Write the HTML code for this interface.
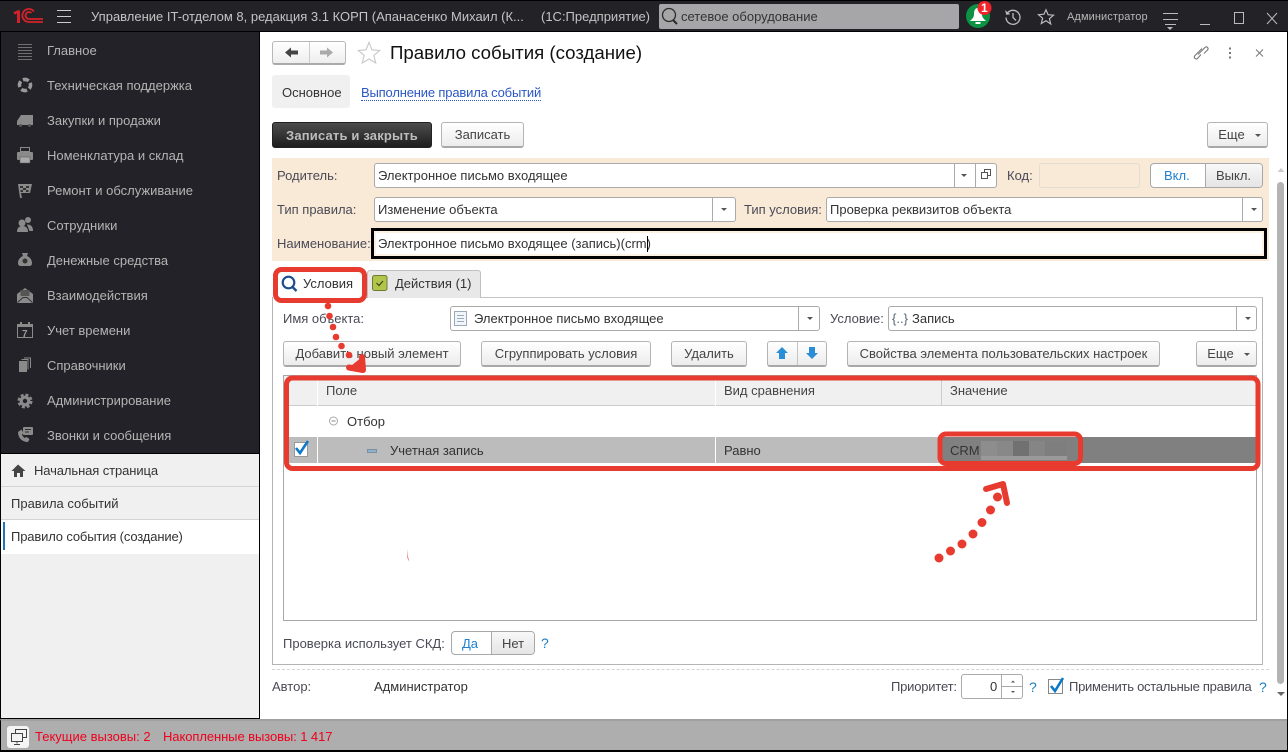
<!DOCTYPE html>
<html><head><meta charset="utf-8">
<style>
html,body{margin:0;padding:0;background:#fff}
#r{position:relative;width:1288px;height:752px;overflow:hidden;background:#fff;font-family:"Liberation Sans",sans-serif;font-size:13px;color:#333}
.t{position:absolute;line-height:16px;white-space:nowrap}
.b{position:absolute;box-sizing:border-box}
.s{color:#b4b4b4;left:47px}
.btn{position:absolute;box-sizing:border-box;height:26px;border:1px solid #b4b4b4;border-bottom:2px solid #a8a8a8;border-radius:3px;background:linear-gradient(#fff,#ececec);text-align:center;line-height:23px;color:#444;white-space:nowrap}
.inp{position:absolute;box-sizing:border-box;height:25px;background:#fff;border:1px solid #aaa;border-radius:3px}
.d{position:absolute;top:0;bottom:0;width:1px;background:#aaa}
.ar{position:absolute;width:0;height:0;border-left:3px solid transparent;border-right:3px solid transparent;border-top:3px solid #555}
.l{color:#4a4a55}
.q{color:#1c7fbf;font-size:14px}
svg{position:absolute;overflow:visible}
</style></head><body><div id="r">

<!-- title bar -->
<div class="b" style="left:0;top:0;width:1288px;height:32px;background:#232227;border-top:1px solid #000;border-bottom:1px solid #000"></div>
<svg style="left:0;top:0" width="100" height="32"><g fill="none" stroke="#d3222a" stroke-width="1.800"><path d="M14 13.500l5-2.500" stroke-width="2.500"/><path d="M18.500 10.500V23" stroke-width="3"/><path d="M43 22H29a6.500 6.500 0 1 1 5-10.500"/><path d="M43 19H29a3.500 3.500 0 1 1 2.500-6"/></g><g stroke="#ccc" stroke-width="1"><path d="M57 10.500h14M57 16.500h14M57 22.500h14"/></g></svg>
<div class="t" style="left:91px;top:9px;color:#c4c4c4">Управление IT-отделом 8, редакция 3.1 КОРП (Апанасенко Михаил (К...</div>
<div class="t" style="left:541px;top:9px;color:#c4c4c4">(1С:Предприятие)</div>
<div class="b" style="left:659px;top:4px;width:300px;height:25px;background:#a6a6a8;border-radius:2px"></div>
<svg style="left:660px;top:5px" width="22" height="22"><circle cx="9" cy="10" r="6.500" fill="none" stroke="#2a2a2a" stroke-width="1.300"/><path d="M13 15l4 4" stroke="#2a2a2a" stroke-width="2"/></svg>
<div class="t" style="left:681px;top:9px;color:#333">сетевое оборудование</div>
<svg style="left:960px;top:0" width="40" height="32"><circle cx="18" cy="16" r="12" fill="#0b9343"/><path d="M18 8c-3.500 0-4 3.500-4 6.500 0 3-2 4.500-4 6.500h16c-2-2-4-3.500-4-6.500 0-3-.5-6.500-4-6.500z" fill="#fff"/><rect x="15.500" y="22" width="5" height="2" fill="#fff"/><circle cx="24.500" cy="8" r="7" fill="#f0222a"/></svg>
<div class="t" style="left:981px;top:0;color:#fff;font-weight:bold;font-size:12px">1</div>
<svg style="left:1004px;top:9px" width="18" height="17" fill="none" stroke="#bbb" stroke-width="1.300"><path d="M3.500 4A7 7 0 1 1 2 8.500"/><path d="M1.500 1.500l1 4 3.500-.5" fill="#bbb" stroke-width=".6"/><path d="M9 4v4.500l3 3"/></svg>
<svg style="left:1038px;top:9px" width="17" height="15"><path d="M8 .8l2.100 4.900 5.400.5-4.100 3.500 1.300 5.300L8 11.700l-4.700 2.800 1.300-5.300L.5 5.700l5.400-.5z" fill="none" stroke="#bbb" stroke-width="1.200"/></svg>
<div class="t" style="left:1067px;top:9px;color:#b8b8b8;font-size:11px;letter-spacing:.1px">Администратор</div>
<svg style="left:1160px;top:8px" width="125" height="24" stroke="#bbb" fill="none"><path d="M3 5.500h15M3 11.500h15M5 16.500h11"/><path d="M7 19l3 3 3-3z" fill="#bbb" stroke="none"/><path d="M40 16.500h10"/><rect x="74.500" y="4.500" width="9" height="11"/><path d="M107 5l10 11M117 5l-10 11"/></svg>

<!-- sidebar -->
<div class="b" style="left:0;top:32px;width:260px;height:687px;background:#f0f0f0;border-left:1px solid #000;border-right:1px solid #000;border-bottom:1px solid #000"></div>
<div class="b" style="left:1px;top:32px;width:258px;height:422px;background:#232228;border-bottom:1px solid #000"></div>
<div class="t s" style="top:43px">Главное</div>
<div class="t s" style="top:78px">Техническая поддержка</div>
<div class="t s" style="top:113px">Закупки и продажи</div>
<div class="t s" style="top:148px">Номенклатура и склад</div>
<div class="t s" style="top:183px">Ремонт и обслуживание</div>
<div class="t s" style="top:218px">Сотрудники</div>
<div class="t s" style="top:253px">Денежные средства</div>
<div class="t s" style="top:288px">Взаимодействия</div>
<div class="t s" style="top:323px">Учет времени</div>
<div class="t s" style="top:358px">Справочники</div>
<div class="t s" style="top:393px">Администрирование</div>
<div class="t s" style="top:428px">Звонки и сообщения</div>
<svg style="left:17px;top:40px" width="20" height="410" fill="#8a8a8a">
<path d="M1 3.500h14M1 6.500h14M1 9.500h14M1 12.500h14M1 15.500h14M1 18.500h14" stroke="#8a8a8a" stroke-width=".8" transform="translate(0 1)"/>
<circle cx="8" cy="45" r="5.500" fill="none" stroke="#999" stroke-width="3.500" stroke-dasharray="6 2.600" transform="rotate(-22 8 45)"/>
<path d="M0 85v-4l4-6h12v10z"/><circle cx="3.500" cy="85.500" r="1.500" fill="#555"/><circle cx="12.500" cy="85.500" r="1.500" fill="#555"/>
<rect x="0" y="112" width="16" height="8" rx="1"/><rect x="3.500" y="107.500" width="9" height="4" fill="none" stroke="#8a8a8a"/><rect x="3" y="117" width="10" height="6" fill="#aaa" stroke="#555" stroke-width=".5"/>
<path d="M1 144h14l-2 9H4l1 5H3z"/><path d="M3 146h3v2H3zM9 146h3v2H9zM6 148h3v2H6zM3.500 150h2.500v2H3.500zM9 150h2.500v2H9z" fill="#333"/>
<circle cx="5" cy="183" r="3.500"/><path d="M0 192c0-4 2-6 5.500-6s5.500 2 5.500 6z"/><circle cx="11" cy="180" r="3"/><path d="M10 184.500c3 0 6 1 6 6.500h-3.500z"/>
<path d="M5 213h6l-1 3c3 1 5 4 5 7 0 2-1 3-3 3H4c-2 0-3-1-3-3 0-3 2-6 5-7z"/><circle cx="8" cy="221" r="2.500" fill="#333"/>
<path d="M0 254l8-6 8 6v9H0z"/><rect x="3.500" y="250" width="9" height="6" fill="#555"/><path d="M0.500 262.500l5.500-5h4l5.500 5" fill="none" stroke="#333"/>
<rect x=".5" y="284.500" width="15" height="13" fill="none" stroke="#8a8a8a"/><rect x="0" y="284" width="16" height="3"/><rect x="3" y="282" width="2" height="3"/><rect x="11" y="282" width="2" height="3"/><text x="5" y="297" font-size="10" font-weight="bold" font-family="Liberation Sans" fill="#999">7</text>
<rect x="2" y="321" width="8" height="11"/><path d="M4.500 319.500h6.500v10M7 318h6.500v10" fill="none" stroke="#8a8a8a"/>
<circle cx="8" cy="361" r="3.800" fill="none" stroke="#8a8a8a" stroke-width="3.200"/><circle cx="8" cy="361" r="6.300" fill="none" stroke="#8a8a8a" stroke-width="2.400" stroke-dasharray="3 2"/>
<path d="M1 392c0 6 4 10 10 10l1.500-3-3-2-2 1c-1-1-2-2-2.500-3.500l1.500-1.500-2-3.500z"/><rect x="6" y="387" width="10" height="8" rx="1"/><path d="M8 389.500h6M8 392h4" stroke="#333"/>
</svg>
<div class="t" style="left:34px;top:463px;color:#333;letter-spacing:-.1px">Начальная страница</div>
<svg style="left:11px;top:463px" width="16" height="16"><path d="M7 1.500L.5 8H3v6h3v-4h3v4h3V8h2.500z" fill="#444"/></svg>
<div class="b" style="left:1px;top:486px;width:258px;height:1px;background:#d4d4d4"></div>
<div class="t" style="left:11px;top:496px;color:#333">Правила событий</div>
<div class="b" style="left:1px;top:519px;width:258px;height:35px;background:#fff;border-top:1px solid #d4d4d4"></div>
<div class="b" style="left:3px;top:522px;width:2px;height:28px;background:#1c76b8"></div>
<div class="t" style="left:11px;top:529px;color:#333;letter-spacing:-.15px">Правило события (создание)</div>

<!-- bottom bar -->
<div class="b" style="left:0;top:719px;width:1288px;height:33px;background:#aeaeae;border-top:2px solid #a0a0a0;border-bottom:2px solid #000;border-left:1px solid #000"></div>
<div class="b" style="left:7px;top:726px;width:22px;height:22px;background:#f4f4f4;border-radius:3px"></div>
<svg style="left:10px;top:729px" width="18" height="18" fill="#f4f4f4" stroke="#444"><rect x="5.500" y=".5" width="11" height="8"/><rect x="1.500" y="4.500" width="11" height="8"/><path d="M7 12.500v2M4 15.500h6"/></svg>
<div class="t" style="left:35px;top:729px;color:#f0001c">Текущие вызовы: 2</div>
<div class="t" style="left:163px;top:729px;color:#f0001c;letter-spacing:-.08px">Накопленные вызовы: 1 417</div>
<div class="b" style="left:1287px;top:32px;width:1px;height:720px;background:#000"></div>

<!-- header -->
<div class="b" style="left:272px;top:41px;width:74px;height:24px;border:1px solid #b8b8b8;border-bottom:2px solid #aaa;border-radius:3px;background:linear-gradient(#fff,#eee)"></div>
<div class="b" style="left:309px;top:42px;width:1px;height:21px;background:#ccc"></div>
<svg style="left:272px;top:41px" width="74" height="24"><path d="M12 12.500l6-5v3h7v4h-7v3z" fill="#444" transform="translate(1 -1)"/><path d="M62 12.500l-6-5v3h-7v4h7v3z" fill="#aaa" transform="translate(-1 -1)"/></svg>
<svg style="left:357px;top:41px" width="24" height="24"><path d="M12 1.500l3 7.300 7.700.6-5.900 5 1.900 7.600L12 18l-6.700 4 1.900-7.600-5.900-5 7.700-.6z" fill="none" stroke="#c8c8c8" stroke-width="1.100"/></svg>
<div class="t" style="left:390px;top:43px;font-size:18.670px;line-height:20px;color:#111">Правило события (создание)</div>
<svg style="left:1190px;top:43px" width="80" height="20" fill="none" stroke="#777"><path d="M9 12l7-7c2-2 4 1 2.500 2.500L15 11M13 6L6 13c-2 2 1 4.500 2.500 3L12 12" stroke-width="1.100" transform="translate(-1 -.5)"/><path d="M40 4.500v2M40 9v2M40 13.500v2" stroke-width="2"/><path d="M66 6.500l7 7M73 6.500l-7 7"/></svg>
<div class="b" style="left:272px;top:75px;width:78px;height:33px;background:#f0f0f0;border-radius:3px"></div>
<div class="t" style="left:282px;top:85px;color:#333">Основное</div>
<div class="t" style="left:361px;top:85px;color:#2a57c5;border-bottom:1px dotted #2a57c5;line-height:15px;letter-spacing:-.17px">Выполнение правила событий</div>

<div class="b" style="left:272px;top:122px;width:160px;height:26px;border-radius:3px;background:linear-gradient(#4c4c4c,#1e1e1e);color:#bdbdbd;text-align:center;line-height:25px;font-weight:bold;letter-spacing:.17px;border:1px solid #222">Записать и закрыть</div>
<div class="btn" style="left:441px;top:122px;width:83px">Записать</div>
<div class="btn" style="left:1207px;top:122px;width:61px;padding-right:12px">Еще<i class="ar" style="left:47px;top:11px"></i></div>

<!-- peach form -->
<div class="b" style="left:272px;top:158px;width:997px;height:103px;background:#f9ead8"></div>
<div class="t l" style="left:277px;top:168px">Родитель:</div>
<div class="inp" style="left:374px;top:163px;width:623px"><i class="d" style="left:579px"></i><i class="d" style="left:600px"></i><i class="ar" style="left:586px;top:10px"></i></div>
<svg style="left:981px;top:169px" width="12" height="12" fill="#fff" stroke="#555"><rect x="3.500" y=".5" width="6" height="6"/><rect x=".5" y="3.500" width="6" height="6"/></svg>
<div class="t" style="left:378px;top:168px;color:#333">Электронное письмо входящее</div>
<div class="t l" style="left:1007px;top:168px">Код:</div>
<div class="b" style="left:1039px;top:163px;width:101px;height:25px;border:1px solid #e4dccf;border-radius:3px;background:#f9ead8"></div>
<div class="b" style="left:1150px;top:163px;width:113px;height:25px;border:1px solid #a8a8a8;border-radius:4px;background:#fff;overflow:hidden"><div class="b" style="left:54px;top:0;width:58px;height:24px;background:linear-gradient(#f8f8f8,#e4e4e4);border-left:1px solid #aaa"></div></div>
<div class="t" style="left:1164px;top:168px;color:#1c7fd0">Вкл.</div>
<div class="t" style="left:1216px;top:168px;color:#444">Выкл.</div>

<div class="t l" style="left:277px;top:202px">Тип правила:</div>
<div class="inp" style="left:374px;top:197px;width:362px"><i class="d" style="left:337px"></i><i class="ar" style="left:346px;top:10px"></i></div>
<div class="t" style="left:378px;top:202px;color:#333">Изменение объекта</div>
<div class="t l" style="left:744px;top:202px">Тип условия:</div>
<div class="inp" style="left:826px;top:197px;width:437px"><i class="d" style="left:415px"></i><i class="ar" style="left:424px;top:10px"></i></div>
<div class="t" style="left:830px;top:202px;color:#333">Проверка реквизитов объекта</div>

<div class="t l" style="left:277px;top:236px">Наименование:</div>
<div class="b" style="left:371px;top:228px;width:896px;height:31px;border:3px solid #000;background:#fff;box-shadow:inset 0 0 0 2px #fdf1e3"></div>
<div class="t" style="left:378px;top:236px;color:#333">Электронное письмо входящее (запись)(crm)</div>
<div class="b" style="left:647px;top:236px;width:1px;height:16px;background:#000"></div>

<!-- tabs / panel -->
<div class="b" style="left:272px;top:297px;width:991px;height:368px;border:1px solid #b4b4b4;border-top:1px solid #c4c4c4"></div>
<div class="b" style="left:367px;top:270px;width:114px;height:28px;background:#e8e8e8;border:1px solid #c0c0c0;border-bottom:none;border-radius:3px 3px 0 0"></div>
<div class="b" style="left:273px;top:296px;width:92px;height:3px;background:#fff"></div>
<svg style="left:280px;top:274px" width="20" height="20"><circle cx="8.500" cy="8.500" r="5.800" fill="none" stroke="#1f4f8f" stroke-width="2.200"/><path d="M12.500 13l4 4" stroke="#1f4f8f" stroke-width="2.500"/></svg>
<div class="t" style="left:303px;top:276px;color:#333">Условия</div>
<svg style="left:372px;top:275px" width="17" height="17"><rect x=".5" y=".5" width="14.500" height="15" rx="2" fill="#b3c44a" stroke="#6d7a34"/><path d="M4.500 8l2.500 2.500 4-4.500" fill="none" stroke="#37481a" stroke-width="1.200"/></svg>
<div class="t" style="left:395px;top:276px;color:#333">Действия (1)</div>

<div class="t l" style="left:283px;top:311px">Имя объекта:</div>
<div class="inp" style="left:450px;top:306px;width:370px"><i class="d" style="left:347px"></i><i class="ar" style="left:356px;top:10px"></i></div>
<svg style="left:454px;top:311px" width="14" height="16"><rect x=".5" y=".5" width="12" height="14" fill="#f2f6fa" stroke="#9ab"/><path d="M3 4.500h7M3 7.500h7M3 10.500h7" stroke="#9ab"/></svg>
<div class="t" style="left:474px;top:311px;color:#333">Электронное письмо входящее</div>
<div class="t l" style="left:830px;top:311px">Условие:</div>
<div class="inp" style="left:888px;top:306px;width:369px"><i class="d" style="left:347px"></i><i class="ar" style="left:356px;top:10px"></i></div>
<div class="t" style="left:892px;top:311px;color:#567">{..}</div>
<div class="t" style="left:912px;top:311px;color:#333">Запись</div>

<div class="btn" style="left:283px;top:341px;width:178px">Добавить новый элемент</div>
<div class="btn" style="left:481px;top:341px;width:170px">Сгруппировать условия</div>
<div class="btn" style="left:671px;top:341px;width:76px">Удалить</div>
<div class="btn" style="left:767px;top:341px;width:60px"><i class="d" style="left:29px;background:#c4c4c4"></i></div>
<svg style="left:767px;top:341px" width="60" height="26" fill="#2a8ed6"><path d="M15 6l6 6h-3v6h-6v-6H9z"/><path d="M45 18l6-6h-3V6h-6v6h-3z"/></svg>
<div class="btn" style="left:847px;top:341px;width:313px">Свойства элемента пользовательских настроек</div>
<div class="btn" style="left:1196px;top:341px;width:61px;padding-right:12px">Еще<i class="ar" style="left:47px;top:11px"></i></div>

<!-- table -->
<div class="b" style="left:283px;top:375px;width:974px;height:246px;border:1px solid #a8a8a8"></div>
<div class="b" style="left:284px;top:376px;width:972px;height:30px;background:#f0f0f0;border-bottom:1px solid #ccc"></div>
<div class="b" style="left:317px;top:376px;width:1px;height:30px;background:#fff"></div>
<div class="b" style="left:715px;top:376px;width:1px;height:30px;background:#fff"></div>
<div class="b" style="left:941px;top:376px;width:1px;height:30px;background:#ccc"></div>
<div class="t" style="left:326px;top:383px;color:#444">Поле</div>
<div class="t" style="left:724px;top:383px;color:#444">Вид сравнения</div>
<div class="t" style="left:950px;top:383px;color:#444">Значение</div>
<svg style="left:328px;top:415px" width="12" height="12"><circle cx="5.500" cy="6" r="4" fill="none" stroke="#aaa"/><path d="M3.500 6h4" stroke="#888"/></svg>
<div class="t" style="left:347px;top:414px;color:#333">Отбор</div>
<div class="b" style="left:284px;top:437px;width:657px;height:26px;background:#bcbcbc"></div>
<div class="b" style="left:941px;top:437px;width:315px;height:26px;background:#808080"></div>
<div class="b" style="left:317px;top:437px;width:1px;height:26px;background:#fff"></div>
<div class="b" style="left:715px;top:437px;width:1px;height:26px;background:#fff"></div>
<div class="b" style="left:284px;top:463px;width:972px;height:1px;background:#fff"></div>
<div class="b" style="left:294px;top:442px;width:14px;height:15px;background:#fff;border:1px solid #999"></div>
<svg style="left:293px;top:439px" width="18" height="18"><path d="M3 9l4 5 8-12" fill="none" stroke="#0f79c9" stroke-width="2.600"/></svg>
<div class="b" style="left:367px;top:449px;width:10px;height:4px;background:#8fb1c9;border:1px solid #7c8fa0"></div>
<div class="t" style="left:390px;top:443px;color:#333">Учетная запись</div>
<div class="t" style="left:724px;top:443px;color:#333">Равно</div>
<div class="t" style="left:950px;top:443px;color:#333">CRM</div>
<div class="b" style="left:981px;top:441px;width:16px;height:19px;background:#8d8d8d"></div>
<div class="b" style="left:997px;top:441px;width:16px;height:19px;background:#888"></div>
<div class="b" style="left:1013px;top:441px;width:16px;height:19px;background:#717171"></div>
<div class="b" style="left:1029px;top:441px;width:16px;height:19px;background:#858585"></div>
<div class="b" style="left:1045px;top:441px;width:22px;height:19px;background:#7e7e7e"></div>
<div class="b" style="left:981px;top:456px;width:86px;height:4px;background:#9a9a9a"></div>

<div class="t l" style="left:283px;top:636px">Проверка использует СКД:</div>
<div class="b" style="left:451px;top:631px;width:84px;height:24px;border:1px solid #a8a8a8;border-radius:4px;background:#fff;overflow:hidden"><div class="b" style="left:39px;top:0;width:45px;height:23px;background:linear-gradient(#f8f8f8,#e4e4e4);border-left:1px solid #aaa"></div></div>
<div class="t" style="left:462px;top:636px;color:#1c7fd0">Да</div>
<div class="t" style="left:502px;top:636px;color:#444">Нет</div>
<div class="t q" style="left:541px;top:635px">?</div>

<div class="b" style="left:272px;top:669px;width:997px;border-top:1px dashed #d4d4d4"></div>
<div class="t l" style="left:272px;top:679px">Автор:</div>
<div class="t" style="left:374px;top:679px;color:#333">Администратор</div>
<div class="t l" style="left:891px;top:679px;letter-spacing:-.2px">Приоритет:</div>
<div class="b" style="left:961px;top:674px;width:62px;height:25px;border:1px solid #aaa;border-radius:3px;background:#fff"><i class="d" style="left:39px"></i><i class="b" style="left:39px;top:11px;width:22px;height:1px;background:#aaa"></i></div>
<div class="t" style="left:990px;top:679px;color:#333">0</div>
<svg style="left:1008px;top:678px" width="10" height="18" fill="#555"><path d="M3 4.500l2-2 2 2zM3 13l2 2 2-2z"/></svg>
<div class="t q" style="left:1029px;top:679px">?</div>
<div class="b" style="left:1048px;top:679px;width:15px;height:15px;border:1px solid #888;background:#fff"></div>
<svg style="left:1048px;top:676px" width="18" height="18"><path d="M3 10l4 5 8-13" fill="none" stroke="#0f79c9" stroke-width="2.600"/></svg>
<div class="t l" style="left:1069px;top:679px;letter-spacing:-.27px">Применить остальные правила</div>
<div class="t q" style="left:1259px;top:679px">?</div>

<!-- scrollbar -->
<div class="b" style="left:1277px;top:182px;width:7px;height:502px;background:#b4b4b4;border-radius:4px"></div>
<svg style="left:1276px;top:165px" width="10" height="535"><path d="M1.500 7L5 3l3.500 4z" fill="#ccc"/><path d="M1 527l4 4 4-4z" fill="#666"/></svg>

<!-- annotations -->
<svg style="left:0;top:0" width="1288" height="752" fill="none" stroke="#e83b30">
<rect x="275.500" y="269.500" width="89" height="31" rx="6" stroke-width="5"/>
<rect x="286.500" y="378" width="971.500" height="90.500" rx="6" stroke-width="5"/>
<rect x="940" y="434" width="140.500" height="29.500" rx="6" stroke-width="5"/>
<g fill="#e83b30" stroke="none">
<circle cx="328" cy="306" r="3.300"/><circle cx="329.500" cy="316" r="3.300"/><circle cx="333" cy="327" r="3.300"/><circle cx="336" cy="337" r="3.300"/><circle cx="341.500" cy="346" r="3.300"/><circle cx="349" cy="355" r="3.300"/>
<circle cx="939" cy="558" r="4.500"/><circle cx="950.500" cy="551" r="4.500"/><circle cx="962" cy="544" r="4.500"/><circle cx="973" cy="534" r="4.500"/><circle cx="982" cy="522.500" r="4.500"/><circle cx="990.500" cy="510" r="4.500"/><circle cx="997.500" cy="497" r="4.500"/>
<path d="M407 549l1 8 1.500 5-2-4z"/>
</g>
<path d="M349 367.500l14 2.500-1-13" stroke-width="6" stroke-linejoin="round" stroke-linecap="round" fill="#e83b30"/>
<path d="M986 489l17-5 4 19" stroke-width="6" stroke-linejoin="round" stroke-linecap="round"/>
</svg>
</div></body></html>
